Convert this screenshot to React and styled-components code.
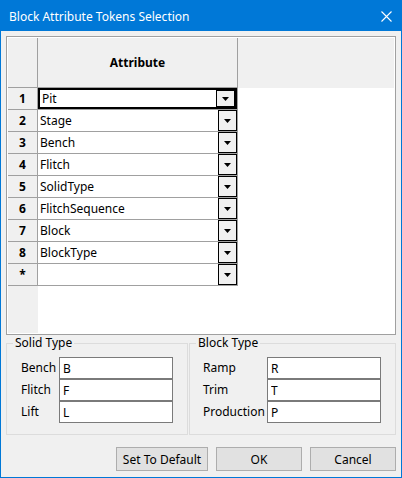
import React from 'react';
import styled, { createGlobalStyle } from 'styled-components';

const GlobalStyle = createGlobalStyle`
  html, body {
    margin: 0;
    padding: 0;
    background: #ffffff;
  }
  body {
    font-family: "Noto Sans", "Liberation Sans", sans-serif;
    font-size: 12px;
    color: #000000;
  }
  * {
    box-sizing: border-box;
  }
`;

const attributes = ['Pit', 'Stage', 'Bench', 'Flitch', 'SolidType', 'FlitchSequence', 'Block', 'BlockType', ''];

const solidTypes = [
  { label: 'Bench', value: 'B' },
  { label: 'Flitch', value: 'F' },
  { label: 'Lift', value: 'L' },
];

const blockTypes = [
  { label: 'Ramp', value: 'R' },
  { label: 'Trim', value: 'T' },
  { label: 'Production', value: 'P' },
];

const App = () => {
  return (
    <>
      <GlobalStyle />
      <Window>
        <TitleBar>
          <Title>Block Attribute Tokens Selection</Title>
          <CloseIcon width="11" height="11" viewBox="0 0 11 11">
            <path d="M0.5 0.5 L10.5 10.5 M10.5 0.5 L0.5 10.5" stroke="#ffffff" strokeWidth="1.1" fill="none" />
          </CloseIcon>
        </TitleBar>
        <Body>
          <GridFrame>
            <Corner />
            <ColumnHeader>Attribute</ColumnHeader>
            <HeaderFill />
            {attributes.map((name, i) => (
              <React.Fragment key={i}>
                <RowHeader>{i < 8 ? i + 1 : '*'}</RowHeader>
                <Cell selected={i === 0}>
                  <CellText>{name}</CellText>
                  <DropButton>
                    <svg width="7" height="4" viewBox="0 0 7 4">
                      <polygon points="0,0 7,0 3.5,4" fill="#000000" />
                    </svg>
                  </DropButton>
                </Cell>
              </React.Fragment>
            ))}
            <RowFiller />
          </GridFrame>

          <Groups>
            <GroupBox width={182}>
              <Legend>Solid Type</Legend>
              <FieldGrid padLeft={14} labelWidth={38}>
                {solidTypes.map((f) => (
                  <React.Fragment key={f.label}>
                    <FieldLabel>{f.label}</FieldLabel>
                    <TextField defaultValue={f.value} />
                  </React.Fragment>
                ))}
              </FieldGrid>
            </GroupBox>
            <GroupBox width={207}>
              <Legend>Block Type</Legend>
              <FieldGrid padLeft={13} labelWidth={64}>
                {blockTypes.map((f) => (
                  <React.Fragment key={f.label}>
                    <FieldLabel>{f.label}</FieldLabel>
                    <TextField defaultValue={f.value} />
                  </React.Fragment>
                ))}
              </FieldGrid>
            </GroupBox>
          </Groups>

          <ButtonRow>
            <DialogButton width={92}>Set To Default</DialogButton>
            <DialogButton width={86}>OK</DialogButton>
            <DialogButton width={86}>Cancel</DialogButton>
          </ButtonRow>
        </Body>
      </Window>
    </>
  );
};

const Window = styled.div`
  width: 402px;
  height: 478px;
  border: 1px solid #0078d7;
  background: #f0f0f0;
  display: flex;
  flex-direction: column;
`;

const TitleBar = styled.div`
  height: 30px;
  flex: none;
  background: #0078d7;
  color: #ffffff;
  display: flex;
  align-items: center;
  justify-content: space-between;
  padding: 0 9px 0 8px;
`;

const Title = styled.span`
  font-size: 12px;
  line-height: 16px;
  margin-top: 1px;
`;

const CloseIcon = styled.svg`
  display: block;
  margin-top: 1px;
`;

const Body = styled.div`
  flex: 1;
  padding: 5px;
  display: flex;
  flex-direction: column;
`;

const GridFrame = styled.div`
  height: 299px;
  flex: none;
  border: 1px solid #a0a0a0;
  padding: 1px;
  background: #ffffff;
  display: grid;
  grid-template-columns: 30px 200px 1fr;
  grid-template-rows: 50px repeat(9, 22px) 1fr;
`;

const Corner = styled.div`
  background: #f0f0f0;
  border-right: 1px solid #a0a0a0;
  border-bottom: 1px solid #a0a0a0;
`;

const ColumnHeader = styled.div`
  background: #f0f0f0;
  border-right: 1px solid #a0a0a0;
  border-bottom: 1px solid #a0a0a0;
  display: flex;
  align-items: center;
  justify-content: center;
  font-weight: bold;
`;

const HeaderFill = styled.div`
  background: #f0f0f0;
`;

const RowHeader = styled.div`
  grid-column: 1;
  background: #f0f0f0;
  border-right: 1px solid #a0a0a0;
  border-bottom: 1px solid #a0a0a0;
  display: flex;
  align-items: center;
  justify-content: center;
  font-weight: bold;
`;

const Cell = styled.div`
  grid-column: 2;
  background: #ffffff;
  border-right: 1px solid #a0a0a0;
  border-bottom: 1px solid #a0a0a0;
  display: flex;
  padding: ${(p) => (p.selected ? '2px' : '0')};
  box-shadow: ${(p) => (p.selected ? 'inset 0 0 0 2px #000000' : 'none')};
`;

const CellText = styled.div`
  flex: 1;
  display: flex;
  align-items: center;
  padding-left: 2px;
  white-space: nowrap;
  overflow: hidden;
`;

const DropButton = styled.div`
  width: 19px;
  flex: none;
  border: 1px solid #000000;
  background: #f0f0f0;
  display: flex;
  align-items: center;
  justify-content: center;
`;

const RowFiller = styled.div`
  grid-column: 1;
  background: #f0f0f0;
`;

const Groups = styled.div`
  display: flex;
  gap: 1px;
`;

const GroupBox = styled.fieldset`
  width: ${(p) => p.width}px;
  margin: 0;
  padding: 0;
  border: 1px solid #dcdcdc;
  min-width: 0;
`;

const Legend = styled.legend`
  margin-left: 6px;
  padding: 0 2px;
  line-height: 16px;
  font-size: 12px;
`;

const FieldGrid = styled.div`
  display: grid;
  grid-template-columns: ${(p) => p.labelWidth}px 114px;
  grid-auto-rows: 22px;
  align-items: center;
  padding: 6px 14px 11px ${(p) => p.padLeft}px;
`;

const FieldLabel = styled.span`
  white-space: nowrap;
  margin-top: -2px;
`;

const TextField = styled.input`
  width: 114px;
  height: 22px;
  margin: 0;
  border: 1px solid #7a7a7a;
  padding: 0 3px;
  background: #ffffff;
  font-family: inherit;
  font-size: 12px;
  color: #000000;
  outline: none;
`;

const ButtonRow = styled.div`
  display: flex;
  justify-content: flex-end;
  gap: 8px;
  margin-top: 12px;
`;

const DialogButton = styled.button`
  width: ${(p) => p.width}px;
  height: 24px;
  margin: 0;
  padding: 0;
  background: #e1e1e1;
  border: 1px solid #adadad;
  font-family: inherit;
  font-size: 12px;
  color: #000000;
`;

export default App;
